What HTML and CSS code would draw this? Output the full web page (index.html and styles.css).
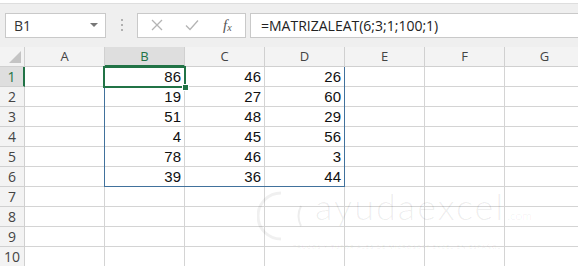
FILE: index.html
```html
<!DOCTYPE html>
<html lang="es">
<head>
<meta charset="UTF-8" />
<meta name="viewport" content="width=device-width, initial-scale=1" />
<title>MATRIZALEAT</title>
<link rel="stylesheet" href="styles.css">
</head>
<body>
<div class="toolbar">
    <div class="name-box">
        <span>B1</span>
        <span class="caret"></span>
    </div>
    <div class="dots"><i></i><i></i><i></i></div>
    <div class="buttons">
        <svg width="12" height="12" viewBox="0 0 12 12"><path d="M1 1L11 11M11 1L1 11" stroke="#b4b4b4" stroke-width="1.3" fill="none"/></svg>
        <svg width="14" height="12" viewBox="0 0 14 12"><path d="M1 6.5L5 10.5L13 1.5" stroke="#b4b4b4" stroke-width="1.3" fill="none"/></svg>
        <span class="fx">f<sub>x</sub></span>
    </div>
    <div class="formula">=MATRIZALEAT(6;3;1;100;1)</div>
</div>

<div class="stack">
    <div class="sheet">
        <div class="hd corner"><span class="tri"></span></div>
        <div class="hd">A</div>
        <div class="hd on-col">B</div>
        <div class="hd">C</div>
        <div class="hd">D</div>
        <div class="hd">E</div>
        <div class="hd">F</div>
        <div class="hd">G</div>

        <div class="rh on-row">1</div><div class="c"></div><div class="c">86</div><div class="c">46</div><div class="c">26</div><div class="c"></div><div class="c"></div><div class="c"></div>
        <div class="rh">2</div><div class="c"></div><div class="c">19</div><div class="c">27</div><div class="c">60</div><div class="c"></div><div class="c"></div><div class="c"></div>
        <div class="rh">3</div><div class="c"></div><div class="c">51</div><div class="c">48</div><div class="c">29</div><div class="c"></div><div class="c"></div><div class="c"></div>
        <div class="rh">4</div><div class="c"></div><div class="c">4</div><div class="c">45</div><div class="c">56</div><div class="c"></div><div class="c"></div><div class="c"></div>
        <div class="rh">5</div><div class="c"></div><div class="c">78</div><div class="c">46</div><div class="c">3</div><div class="c"></div><div class="c"></div><div class="c"></div>
        <div class="rh">6</div><div class="c"></div><div class="c">39</div><div class="c">36</div><div class="c">44</div><div class="c"></div><div class="c"></div><div class="c"></div>
        <div class="rh">7</div><div class="c"></div><div class="c"></div><div class="c"></div><div class="c"></div><div class="c"></div><div class="c"></div><div class="c"></div>
        <div class="rh">8</div><div class="c"></div><div class="c"></div><div class="c"></div><div class="c"></div><div class="c"></div><div class="c"></div><div class="c"></div>
        <div class="rh">9</div><div class="c"></div><div class="c"></div><div class="c"></div><div class="c"></div><div class="c"></div><div class="c"></div><div class="c"></div>
        <div class="rh">10</div><div class="c"></div><div class="c"></div><div class="c"></div><div class="c"></div><div class="c"></div><div class="c"></div><div class="c"></div>
    </div>

    <div class="sheet overlay">
        <div class="spill"></div>
        <div class="sel"><span class="handle"></span></div>
        <div class="mark">
            <svg class="ring" width="50" height="52" viewBox="0 0 50 52"><path d="M24 3A23 23 0 0 0 24 49" stroke="rgba(0,0,0,0.06)" stroke-width="3" fill="none"/><path d="M44 16Q39 26 44 36" stroke="rgba(0,0,0,0.07)" stroke-width="2" fill="none"/></svg>
            <div class="mark-text">
                <div class="mark-big">ayudaexcel<span>.com</span></div>
                <div class="mark-small">TRUCOS Y TUTORIALES DE MICROSOFT EXCEL EN ESPAÑOL</div>
            </div>
        </div>
    </div>
</div>
</body>
</html>
```

FILE: styles.css
```css
body {
    margin: 0;
    width: 578px;
    height: 266px;
    overflow: hidden;
    background: #fff;
    font-family: "Open Sans", "Liberation Sans", sans-serif;
}
.toolbar {
    display: flex;
    align-items: center;
    height: 44px;
    margin-top: 3px;
    padding: 0 0 1px 5px;
    background: #efefef;
    border-top: 1px solid #dedede;
    box-sizing: border-box;
}
.name-box {
    display: flex;
    align-items: center;
    justify-content: space-between;
    width: 101px;
    height: 25px;
    padding: 0 7px 0 8px;
    box-sizing: border-box;
    background: #fff;
    border: 1px solid #c9c9c9;
    font-size: 14px;
    color: #333;
}
.caret {
    width: 0;
    height: 0;
    border-left: 4px solid transparent;
    border-right: 4px solid transparent;
    border-top: 4px solid #777;
}
.dots {
    display: flex;
    flex-direction: column;
    gap: 3px;
    width: 31px;
    align-items: center;
}
.dots i {
    width: 2px;
    height: 2px;
    background: #b0b0b0;
}
.buttons {
    display: flex;
    align-items: center;
    width: 109px;
    height: 25px;
    box-sizing: border-box;
    padding: 0 10px 0 13px;
    gap: 22px;
    background: #fff;
    border: 1px solid #c9c9c9;
}
.fx {
    font-family: "Liberation Serif", serif;
    font-style: italic;
    font-size: 15px;
    color: #555;
    margin-left: 2px;
}
.fx sub {
    font-size: 10px;
    vertical-align: -1px;
}
.formula {
    flex: 1;
    height: 25px;
    margin-left: 4px;
    padding-left: 10px;
    box-sizing: border-box;
    background: #fff;
    border: 1px solid #c9c9c9;
    border-right: none;
    font-size: 14px;
    line-height: 23px;
    color: #222;
}

/* the cells and the overlay share one grid cell */
.stack {
    display: grid;
}
.sheet {
    grid-area: 1 / 1;
    display: grid;
    grid-template-columns: 25px repeat(7, 80px);
    grid-template-rows: repeat(11, 20px);
}
.overlay {
    pointer-events: none;
}
.hd, .rh, .c {
    box-sizing: border-box;
    border-right: 1px solid #d4d4d4;
    border-bottom: 1px solid #d4d4d4;
}
.hd {
    background: #f3f3f3;
    border-color: #d0d0d0;
    text-align: center;
    font-size: 13px;
    line-height: 19px;
    color: #444;
}
.corner {
    position: relative;
}
.tri {
    position: absolute;
    right: 3px;
    bottom: 3px;
    width: 0;
    height: 0;
    border-left: 12px solid transparent;
    border-bottom: 12px solid #c4c4c4;
}
.on-col {
    background: #dedede;
    border-bottom: 2px solid #217346;
    color: #217346;
}
.rh {
    background: #f3f3f3;
    border-color: #d0d0d0;
    text-align: center;
    font-size: 14px;
    line-height: 19px;
    color: #444;
}
.on-row {
    background: #dedede;
    border-right: 2px solid #217346;
    color: #217346;
}
.c {
    text-align: right;
    padding-right: 3px;
    font-family: "Liberation Sans", sans-serif;
    font-size: 15px;
    line-height: 20px;
    color: #111;
}
.spill {
    grid-column: 3 / 6;
    grid-row: 2 / 8;
    margin-left: -1px;
    border: 1px solid #41719c;
    border-top: none;
}
.sel {
    grid-column: 3 / 4;
    grid-row: 2 / 3;
    margin: -1px -1px -1px -2px;
    border: 2px solid #217346;
    position: relative;
}
.handle {
    position: absolute;
    right: -5px;
    bottom: -5px;
    width: 5px;
    height: 5px;
    background: #217346;
    border: 1px solid #fff;
}
.mark {
    grid-column: 5 / 9;
    grid-row: 8 / 12;
    display: flex;
    align-items: flex-start;
    margin-left: -8px;
    padding-top: 1px;
}
.ring {
    margin-top: 2px;
}
.mark-text {
    margin-left: 8px;
}
.mark-big {
    font-family: "Lato", sans-serif;
    font-weight: 300;
    font-size: 36px;
    line-height: 36px;
    letter-spacing: 2px;
    color: rgba(0,0,0,0.07);
}
.mark-big span {
    font-size: 12px;
    letter-spacing: 0;
    margin-left: 2px;
}
.mark-small {
    margin: 9px 0 0 -22px;
    font-size: 6px;
    line-height: 8px;
    letter-spacing: 0.9px;
    white-space: nowrap;
    color: rgba(0,0,0,0.07);
}
```
